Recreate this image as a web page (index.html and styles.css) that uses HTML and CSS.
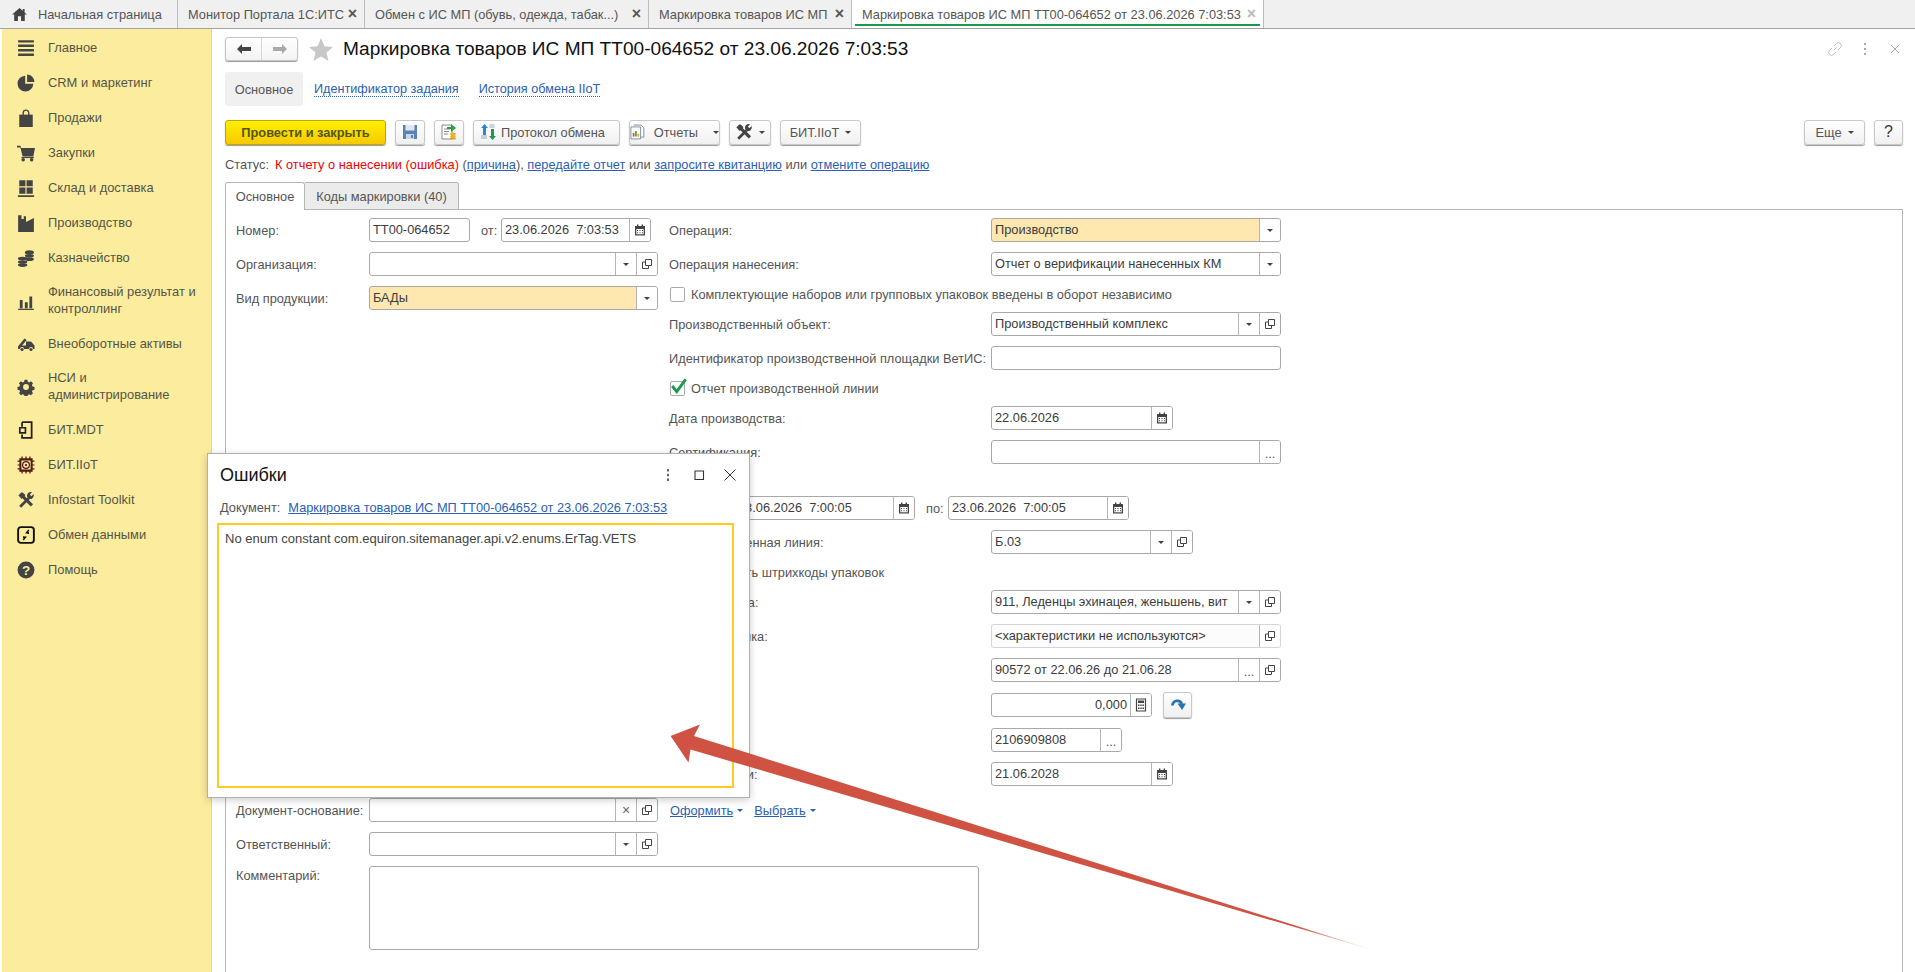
FILE: index.html
```html
<!DOCTYPE html>
<html lang="ru">
<head>
    <meta charset="UTF-8">
    <title>Маркировка товаров ИС МП ТТ00-064652</title>
    <link rel="stylesheet" href="styles.css">
</head>
<body>
    <svg class="sprite" aria-hidden="true">
        <symbol id="i-copy" viewBox="0 0 12 12"><path d="M4.500 1.500h6v6h-6zM4.500 4H1.500v6.500h6V7.500" fill="none" stroke="#444" stroke-width="1"/></symbol>
        <symbol id="i-cal" viewBox="0 0 12 12"><path d="M1 2h10v9.500H1z" fill="#444"/><path d="M3 .5h1.400V3H3zM7.600 .5H9V3H7.600z" fill="#444"/><path d="M2.300 5h7.400v5.300H2.300z" fill="#fff"/><path d="M3 6h1v1H3zM5.500 6h1v1h-1zM8 6h1v1H8zM3 8.200h1v1H3zM5.500 8.200h1v1h-1zM8 8.200h1v1H8z" fill="#444"/></symbol>
        <symbol id="i-calc" viewBox="0 0 12 14"><path d="M1.500 1h9v12h-9z" fill="none" stroke="#444" stroke-width="1.200"/><path d="M3 2.500h6V5H3z" fill="#444"/><path d="M3 6.500h1.500V8H3zM5.300 6.500h1.500V8H5.300zM7.500 6.500H9V8H7.500zM3 9.500h1.500V11H3zM5.300 9.500h1.500V11H5.300zM7.500 9.500H9V11H7.500z" fill="#444"/></symbol>
        <symbol id="i-tools" viewBox="0 0 20 20"><path d="M1.500 5L5 1.500l1.500.5 3 2.500-1 1 9.300 9.300-2.500 2.500-9.300-9.300-1 1-2-2.500z" fill="#444"/><path d="M3.500 17.500L13 8" stroke="#444" stroke-width="3"/><path d="M16.800 1.300a4.300 4.300 0 0 0-5.500 5.500L13 8.700a4.300 4.300 0 0 0 5.500-5.500L16 5.700 14.300 4z" fill="#444"/></symbol>
    </svg>

    <nav class="tabs">
        <div class="tab tab-home">
            <svg class="home-icon" viewBox="0 0 16 14"><path d="M8 0L0 7h2.300v7h4V9h3.400v5h4V7H16L13.500 4.800V1h-2v2L8 0z" fill="#444"/></svg>
            Начальная страница
        </div>
        <div class="tab tab-portal">Монитор Портала 1С:ИТС <span class="tab-x">×</span></div>
        <div class="tab tab-exchange">Обмен с ИС МП (обувь, одежда, табак...) <span class="tab-x">×</span></div>
        <div class="tab tab-list">Маркировка товаров ИС МП <span class="tab-x">×</span></div>
        <div class="tab tab-active">Маркировка товаров ИС МП ТТ00-064652 от 23.06.2026 7:03:53 <span class="tab-x tab-x-off">×</span></div>
        <div class="tab-rest"></div>
    </nav>

    <div class="layout">
        <aside class="sidebar">
            <div class="side-item"><svg class="side-icon" viewBox="0 0 16 16"><path d="M1 1h14v2.200H1zM1 4.800h14V7H1zM1 8.800h14V11H1zM1 12.800h14V15H1z" fill="#444"/></svg>Главное</div>
            <div class="side-item"><svg class="side-icon" viewBox="0 0 16 16"><path d="M7.300 1.500v7.200h7.200A7 7 0 1 1 7.300 1.500z" fill="#444"/><path d="M9 0.500a6.500 6.500 0 0 1 6.500 6.500H9z" fill="#444"/></svg>CRM и маркетинг</div>
            <div class="side-item"><svg class="side-icon" viewBox="0 0 16 16"><path d="M2 5h12v11H2z" fill="#444"/><path d="M5.500 7V3.500a2.500 2.500 0 0 1 5 0V7" fill="none" stroke="#444" stroke-width="1.200"/></svg>Продажи</div>
            <div class="side-item"><svg class="side-icon" viewBox="0 0 16 16"><path d="M0 1.500h3l.8 2H16l-1.500 7.500H5L3 3H0z" fill="#444"/><circle cx="5.500" cy="14" r="1.600" fill="#444"/><circle cx="13" cy="14" r="1.600" fill="#444"/><path d="M4 11.500h11v1H4z" fill="#444"/></svg>Закупки</div>
            <div class="side-item"><svg class="side-icon" viewBox="0 0 16 16"><path d="M2 1h5.500v5.500H2zM8.500 1H14v5.500H8.500zM2 7.500h5.500V13H2zM8.500 7.500H14V13H8.500zM.8 14.500h14.400V16H.8z" fill="#444"/></svg>Склад и доставка</div>
            <div class="side-item"><svg class="side-icon" viewBox="0 0 16 16"><path d="M1 16V1h3v3.500h2V2l2 0v5l7-3.500V16z" fill="#444"/></svg>Производство</div>
            <div class="side-item"><svg class="side-icon" viewBox="0 0 16 16"><ellipse cx="11" cy="3" rx="4" ry="1.800" fill="#444"/><ellipse cx="11" cy="6" rx="4" ry="1.600" fill="#444"/><ellipse cx="11" cy="9" rx="4" ry="1.600" fill="#444"/><ellipse cx="5" cy="8.500" rx="4.200" ry="1.700" fill="#444"/><ellipse cx="5" cy="11.500" rx="4.200" ry="1.600" fill="#444"/><ellipse cx="5" cy="14.300" rx="4.200" ry="1.600" fill="#444"/></svg>Казначейство</div>
            <div class="side-item side-item-two"><svg class="side-icon" viewBox="0 0 16 16"><path d="M2.500 7H5v7.500H2.500zM7 9h2.500v5.500H7zM11 4h2.500v10.500H11zM1 14.800h14V16H1z" fill="#444"/></svg><span>Финансовый результат и контроллинг</span></div>
            <div class="side-item"><svg class="side-icon" viewBox="0 0 18 16"><path d="M1 10.500L7.500 2.500l2.200 1.500L5 9.500h4V5.500h5l3.500 4v3.500h-1.500a2 2 0 0 0-4 0H7a2 2 0 0 0-4 0H1z" fill="#444"/><circle cx="5" cy="13.500" r="1.600" fill="#444"/><circle cx="14" cy="13.500" r="1.600" fill="#444"/></svg>Внеоборотные активы</div>
            <div class="side-item side-item-two"><svg class="side-icon" viewBox="0 0 16 16"><path d="M6.500 0.500h3l.4 2 1.500.7 1.800-1.100 2.100 2.100-1.100 1.800.7 1.500 2 .4v3l-2 .4-.7 1.500 1.100 1.800-2.100 2.100-1.800-1.100-1.500.7-.4 2h-3l-.4-2-1.500-.7-1.800 1.100-2.100-2.100 1.100-1.800-.7-1.500-2-.4v-3l2-.4.7-1.500L.6 4.200l2.100-2.100 1.800 1.100 1.500-.7z" fill="#444" transform="translate(1.200 1.200) scale(.85)"/><circle cx="8" cy="8" r="2.600" fill="#fbec9e"/></svg><span>НСИ и<br>администрирование</span></div>
            <div class="side-item"><svg class="side-icon" viewBox="0 0 16 16"><path d="M4.500 1h8.500v14H4.500V12" fill="none" stroke="#222" stroke-width="1.600"/><path d="M4.500 1v4" fill="none" stroke="#222" stroke-width="1.600"/><path d="M2.500 6h5v4.500h-5z" fill="none" stroke="#222" stroke-width="1.500"/></svg>БИТ.MDT</div>
            <div class="side-item"><svg class="side-icon" viewBox="0 0 16 16"><path d="M3 3h10v10H3z" fill="none" stroke="#521818" stroke-width="1.800"/><path d="M4.500.5v2.500M8 .5v2.500M11.500.5v2.500M4.500 13v2.500M8 13v2.500M11.500 13v2.500M.5 4.500H3M.5 8H3M.5 11.500H3M13 4.500h2.500M13 8h2.500M13 11.500h2.500" stroke="#521818" stroke-width="1.100"/><circle cx="8" cy="8" r="3" fill="none" stroke="#521818" stroke-width="1.100"/><circle cx="8" cy="8" r="1" fill="#521818"/></svg>БИТ.IIoT</div>
            <div class="side-item"><svg class="side-icon" viewBox="0 0 20 20"><use href="#i-tools"/></svg>Infostart Toolkit</div>
            <div class="side-item"><svg class="side-icon" viewBox="0 0 16 16"><rect x="1" y="1" width="14" height="14" rx="2.500" fill="none" stroke="#111" stroke-width="1.700"/><path d="M10.500 3.500l-2 2.500h1.500v1M5.500 12.500l2-2.500H6V9" fill="none" stroke="#111" stroke-width="1.300"/></svg>Обмен данными</div>
            <div class="side-item"><svg class="side-icon" viewBox="0 0 16 16"><circle cx="8" cy="8" r="7.500" fill="#444"/><text x="8" y="12" text-anchor="middle" class="help-mark">?</text></svg>Помощь</div>
        </aside>

        <main class="main">
            <header class="head">
                <div class="nav-btns">
                    <span class="nav-btn"><svg class="nav-arrow" viewBox="0 0 14 10"><path d="M0 5l5-5v3h9v4H5v3z" fill="#444"/></svg></span>
                    <span class="nav-btn"><svg class="nav-arrow" viewBox="0 0 14 10"><path d="M14 5L9 0v3H0v4h9v3z" fill="#aaa"/></svg></span>
                </div>
                <svg class="star" viewBox="0 0 24 23"><path d="M12 0l3.500 8.200 8.500.7-6.500 5.700 2 8.400L12 18.500 4.500 23l2-8.400L0 8.900l8.500-.7z" fill="#c8c8c8"/></svg>
                <h1 class="title">Маркировка товаров ИС МП ТТ00-064652 от 23.06.2026 7:03:53</h1>
                <div class="head-tools">
                    <svg class="head-ic" viewBox="0 0 16 16"><path d="M6.500 9.500l3-3M5 7L2.500 9.500a2.800 2.800 0 0 0 4 4L9 11M7 5l2.500-2.500a2.800 2.800 0 0 1 4 4L11 9" fill="none" stroke="#bbb" stroke-width="1"/></svg>
                    <svg class="head-ic" viewBox="0 0 16 16"><path d="M7 2h2v2H7zM7 7h2v2H7zM7 12h2v2H7z" fill="#aaa"/></svg>
                    <svg class="head-ic" viewBox="0 0 16 16"><path d="M4 4l8 8M12 4l-8 8" stroke="#aaa" stroke-width="1"/></svg>
                </div>
            </header>

            <div class="subnav">
                <span class="subnav-cur">Основное</span>
                <a class="subnav-link">Идентификатор задания</a>
                <a class="subnav-link">История обмена IIoT</a>
            </div>

            <div class="toolbar">
                <button class="btn btn-main">Провести и закрыть</button>
                <button class="btn btn-ic"><svg class="tb-ic" viewBox="0 0 16 16"><path d="M1 1h14v14H1z" fill="#5b82b4"/><path d="M3.500 1h9v5.500h-9z" fill="#dfe8f2"/><path d="M4 10h8v5H4z" fill="#c9d6e6"/><path d="M9 11h2v3H9z" fill="#5b82b4"/></svg></button>
                <button class="btn btn-ic"><svg class="tb-ic" viewBox="0 0 16 16"><path d="M1 1h10v14H1z" fill="#fff" stroke="#8a8a8a"/><path d="M3 5h6M3 7.500h5M3 10h4" stroke="#8a8a8a"/><path d="M6 3h4V0l5 4-5 4V5H6z" fill="#2e9e3e"/><ellipse cx="12" cy="10" rx="3" ry="1.200" fill="#e6b422"/><ellipse cx="12" cy="12.200" rx="3" ry="1.200" fill="#e6b422"/><ellipse cx="12" cy="14.400" rx="3" ry="1.200" fill="#d9a514"/></svg></button>
                <button class="btn btn-proto"><svg class="tb-ic" viewBox="0 0 16 16"><path d="M1 4l3.500-4L8 4H6v7H3V4z" fill="#2d86d2"/><path d="M9 12l3.500 4 3.500-4h-2V5h-3v7z" fill="#22964a"/><path d="M1 12h6M1 14h6M9.500 1h5M9.500 3h5" stroke="#9ab" stroke-width="1"/></svg>Протокол обмена</button>
                <button class="btn btn-rep"><svg class="tb-ic" viewBox="0 0 16 16"><path d="M4 .5h8l3 3v10h-3" fill="#fff" stroke="#7a8a9a"/><path d="M1 2.500h10.500v13H1z" fill="#fff" stroke="#7a8a9a"/><path d="M3 9h1.800v4H3z" fill="#d9482b"/><path d="M5.500 7h1.800v6H5.500z" fill="#36a24a"/><path d="M8 10h1.800v3H8z" fill="#e6a422"/></svg>Отчеты<i class="caret"></i></button>
                <button class="btn btn-tool"><svg class="tb-tool" viewBox="0 0 20 20"><use href="#i-tools"/></svg><i class="caret"></i></button>
                <button class="btn btn-bit">БИТ.IIoT<i class="caret"></i></button>
                <span class="toolbar-sp"></span>
                <button class="btn btn-more">Еще<i class="caret"></i></button>
                <button class="btn btn-help">?</button>
            </div>

            <p class="status">Статус:<span class="status-err">К отчету о нанесении (ошибка)</span> (<a>причина</a>), <a>передайте отчет</a> или <a>запросите квитанцию</a> или <a>отмените операцию</a></p>

            <div class="tabstrip">
                <span class="page-tab page-tab-cur">Основное</span>
                <span class="page-tab page-tab-codes">Коды маркировки (40)</span>
            </div>

            <section class="panel">
                <div class="form-top">
                    <div class="col-left">
                        <div class="row">
                            <label class="lbl-l">Номер:</label>
                            <div class="fld w-num"><span class="val">ТТ00-064652</span></div>
                            <label class="lbl-from">от:</label>
                            <div class="fld w-dt"><span class="val">23.06.2026&nbsp; 7:03:53</span><span class="cell"><svg class="ic12"><use href="#i-cal"/></svg></span></div>
                        </div>
                        <div class="row">
                            <label class="lbl-l">Организация:</label>
                            <div class="fld w-left"><span class="val"></span><span class="cell"><i class="caret"></i></span><span class="cell"><svg class="ic12"><use href="#i-copy"/></svg></span></div>
                        </div>
                        <div class="row">
                            <label class="lbl-l">Вид продукции:</label>
                            <div class="fld w-left fld-req"><span class="val">БАДы</span><span class="cell"><i class="caret"></i></span></div>
                        </div>
                    </div>

                    <div class="col-right">
                        <div class="row"><label class="lbl-r">Операция:</label><div class="fld w-full fld-req"><span class="val">Производство</span><span class="cell"><i class="caret"></i></span></div></div>
                        <div class="row"><label class="lbl-r">Операция нанесения:</label><div class="fld w-full"><span class="val">Отчет о верификации нанесенных КМ</span><span class="cell"><i class="caret"></i></span></div></div>
                        <div class="row-check"><span class="check"></span>Комплектующие наборов или групповых упаковок введены в оборот независимо</div>
                        <div class="row"><label class="lbl-r">Производственный объект:</label><div class="fld w-full"><span class="val">Производственный комплекс</span><span class="cell"><i class="caret"></i></span><span class="cell"><svg class="ic12"><use href="#i-copy"/></svg></span></div></div>
                        <div class="row"><label class="lbl-r">Идентификатор производственной площадки ВетИС:</label><div class="fld w-full"><span class="val"></span></div></div>
                        <div class="row-check"><span class="check"><svg class="check-mark" viewBox="0 0 16 16"><path d="M2 8l4 5 8-11" fill="none" stroke="#1a9a4a" stroke-width="2.600"/></svg></span>Отчет производственной линии</div>
                        <div class="row"><label class="lbl-r">Дата производства:</label><div class="fld w-date"><span class="val">22.06.2026</span><span class="cell"><svg class="ic12"><use href="#i-cal"/></svg></span></div></div>
                        <div class="row"><label class="lbl-r">Сертификация:</label><div class="fld w-full"><span class="val"></span><span class="cell cell-dots">...</span></div></div>
                        <div class="row-blank"></div>
                        <div class="row">
                            <label class="lbl-period">Период с:</label>
                            <div class="fld w-period"><span class="val">23.06.2026&nbsp; 7:00:05</span><span class="cell"><svg class="ic12"><use href="#i-cal"/></svg></span></div>
                            <label class="lbl-to">по:</label>
                            <div class="fld w-period"><span class="val">23.06.2026&nbsp; 7:00:05</span><span class="cell"><svg class="ic12"><use href="#i-cal"/></svg></span></div>
                        </div>
                        <div class="row"><label class="lbl-r">Производственная линия:</label><div class="fld w-line"><span class="val">Б.03</span><span class="cell"><i class="caret"></i></span><span class="cell"><svg class="ic12"><use href="#i-copy"/></svg></span></div></div>
                        <div class="row-check"><span class="check"></span>Установить штрихкоды упаковок</div>
                        <div class="row"><label class="lbl-r">Номенклатура:</label><div class="fld w-full"><span class="val val-tight">911, Леденцы эхинацея, женьшень, вит</span><span class="cell"><i class="caret"></i></span><span class="cell"><svg class="ic12"><use href="#i-copy"/></svg></span></div></div>
                        <div class="row"><label class="lbl-r">Характеристика:</label><div class="fld w-full fld-ro"><span class="val">&lt;характеристики не используются&gt;</span><span class="cell"><svg class="ic12"><use href="#i-copy"/></svg></span></div></div>
                        <div class="row"><label class="lbl-r">Сертификат:</label><div class="fld w-full"><span class="val">90572 от 22.06.26 до 21.06.28</span><span class="cell cell-dots">...</span><span class="cell"><svg class="ic12"><use href="#i-copy"/></svg></span></div></div>
                        <div class="row row-tall">
                            <label class="lbl-r">Количество:</label>
                            <div class="fld w-qty"><span class="val val-num">0,000</span><span class="cell"><svg class="ic14"><use href="#i-calc"/></svg></span></div>
                            <button class="btn btn-go"><svg class="go-ic" viewBox="0 0 16 16"><path d="M2.500 8.500a4.800 4.800 0 0 1 9.300-1.500" fill="none" stroke="#2874b0" stroke-width="2.800"/><path d="M7.500 6.500h8.500l-4 6.500z" fill="#2874b0"/></svg></button>
                        </div>
                        <div class="row"><label class="lbl-r">Код ТН ВЭД:</label><div class="fld w-code"><span class="val">2106909808</span><span class="cell cell-dots">...</span></div></div>
                        <div class="row"><label class="lbl-r">Срок годности:</label><div class="fld w-date"><span class="val">21.06.2028</span><span class="cell"><svg class="ic12"><use href="#i-cal"/></svg></span></div></div>
                    </div>
                </div>

                <div class="form-bottom">
                    <div class="row">
                        <label class="lbl-l">Документ-основание:</label>
                        <div class="fld w-left"><span class="val"></span><span class="cell cell-x">×</span><span class="cell"><svg class="ic12"><use href="#i-copy"/></svg></span></div>
                        <a class="act-link act-first">Оформить</a><i class="caret caret-blue"></i>
                        <a class="act-link">Выбрать</a><i class="caret caret-blue"></i>
                    </div>
                    <div class="row">
                        <label class="lbl-l">Ответственный:</label>
                        <div class="fld w-left"><span class="val"></span><span class="cell"><i class="caret"></i></span><span class="cell"><svg class="ic12"><use href="#i-copy"/></svg></span></div>
                    </div>
                    <div class="row row-comment">
                        <label class="lbl-l">Комментарий:</label>
                        <div class="fld fld-area"></div>
                    </div>
                </div>
            </section>
        </main>
    </div>

    <!-- окно поверх формы -->
    <div class="dialog">
        <div class="dialog-head">
            <span class="dialog-title">Ошибки</span>
            <svg class="dialog-ic" viewBox="0 0 16 16"><path d="M7 2h2v2.400H7zM7 6.800h2v2.400H7zM7 11.600h2V14H7z" fill="#666"/></svg>
            <svg class="dialog-ic" viewBox="0 0 16 16"><path d="M4 4h8.500v8.500H4z" fill="none" stroke="#333" stroke-width="1.100"/></svg>
            <svg class="dialog-ic" viewBox="0 0 16 16"><path d="M2.500 2.500l11 11M13.500 2.500l-11 11" stroke="#333" stroke-width="1"/></svg>
        </div>
        <div class="dialog-doc">Документ:<a>Маркировка товаров ИС МП ТТ00-064652 от 23.06.2026 7:03:53</a></div>
        <div class="dialog-box">No enum constant com.equiron.sitemanager.api.v2.enums.ErTag.VETS</div>
    </div>

    <!-- стрелка с аннотации -->
    <svg class="annot" viewBox="0 0 1915 972">
        <defs>
            <linearGradient id="fade" gradientUnits="userSpaceOnUse" x1="1300" y1="920" x2="1376" y2="951">
                <stop offset="0" stop-color="#d05242"/>
                <stop offset="1" stop-color="#d05242" stop-opacity="0"/>
            </linearGradient>
        </defs>
        <path d="M670.600 736L700 724.500 694 736 1376 951 690.500 749.500 688.500 762.500z" fill="url(#fade)"/>
    </svg>
</body>
</html>
```

FILE: styles.css
```css
html, body {
    height: 100%;
}

body {
    margin: 0;
    overflow: hidden;
    background: #fff;
    font-family: "Liberation Sans", Arial, sans-serif;
    font-size: 12.800px;
    color: #555;
    display: flex;
    flex-direction: column;
}

a {
    color: #2a5fb4;
    text-decoration: underline;
}

.sprite {
    display: none;
}

/* вкладки сверху */
.tabs {
    display: flex;
    height: 28px;
    flex: none;
    background: #f0f0f0;
    border-bottom: 1px solid #a3a3a3;
}

.tab {
    display: flex;
    align-items: center;
    justify-content: space-between;
    box-sizing: border-box;
    padding: 0 7px 0 10px;
    border-right: 1px solid #bdbdbd;
    white-space: nowrap;
    flex: none;
}

.tab-home { width: 178px; padding-left: 12px; justify-content: flex-start; }
.tab-portal { width: 187px; }
.tab-exchange { width: 284px; }
.tab-list { width: 203px; }

.tab-active {
    width: 412px;
    background: #fff;
    position: relative;
}

.tab-active::after {
    content: "";
    position: absolute;
    left: 3px;
    right: 3px;
    bottom: 2px;
    height: 2px;
    background: #1a9a4a;
}

.home-icon {
    width: 15px;
    height: 13px;
    margin-right: 11px;
}

.tab-x {
    font-size: 16px;
    font-weight: bold;
    color: #555;
    margin-left: 3px;
}

.tab-x-off {
    color: #bbb;
}

.tab-rest {
    flex: 1;
}

.layout {
    flex: 1;
    display: flex;
    min-height: 0;
}

/* левое меню */
.sidebar {
    width: 210px;
    margin-left: 2px;
    flex: none;
    box-sizing: border-box;
    padding-top: 1px;
    font-size: 12.900px;
    background: #fbec9e;
    border-right: 1px solid #e6d88f;
}

.side-item {
    display: flex;
    align-items: center;
    height: 35px;
    padding-left: 15px;
    color: #555545;
}

.side-item-two {
    height: 51px;
    line-height: 16.500px;
}

.side-icon {
    width: 18px;
    height: 18px;
    margin-right: 13px;
    flex: none;
}

.help-mark {
    font-size: 12px;
    font-weight: bold;
    fill: #fbec9e;
}

/* форма */
.main {
    flex: 1;
    min-width: 0;
    display: flex;
    flex-direction: column;
    padding: 8px 12px 0 13px;
}

.head {
    display: flex;
    align-items: center;
    height: 24px;
    flex: none;
}

.nav-btns {
    display: flex;
    width: 73px;
    height: 24px;
    box-sizing: border-box;
    border: 1px solid #c4c4c4;
    border-radius: 3px;
    box-shadow: 0 1px 1px #999;
    background: linear-gradient(#fff, #f3f3f3);
}

.nav-btn {
    flex: 1;
    display: flex;
    align-items: center;
    justify-content: center;
}

.nav-btn + .nav-btn {
    border-left: 1px solid #d5d5d5;
}

.nav-arrow {
    width: 14px;
    height: 10px;
}

.star {
    width: 24px;
    height: 23px;
    margin-left: 11px;
}

.title {
    margin: 0 0 0 10px;
    font-size: 19.100px;
    font-weight: normal;
    color: #111;
    white-space: nowrap;
}

.head-tools {
    margin-left: auto;
    display: flex;
    gap: 14px;
}

.head-ic {
    width: 16px;
    height: 16px;
}

.subnav {
    display: flex;
    align-items: center;
    height: 34px;
    margin-top: 11px;
    flex: none;
}

.subnav-cur {
    display: flex;
    align-items: center;
    justify-content: center;
    width: 78px;
    height: 100%;
    background: #f0f0f0;
    border-radius: 3px;
}

.subnav-link {
    margin-left: 11px;
    font-size: 12.650px;
    color: #2a5fb4;
    text-decoration: none;
    border-bottom: 1px dotted #2a5fb4;
}

.subnav-link + .subnav-link {
    margin-left: 20px;
}

.toolbar {
    display: flex;
    align-items: center;
    gap: 9px;
    height: 26px;
    margin-top: 13px;
    flex: none;
}

.btn {
    display: inline-flex;
    align-items: center;
    justify-content: center;
    height: 25px;
    box-sizing: border-box;
    padding: 0;
    border: 1px solid #c8c8c8;
    border-radius: 3px;
    background: linear-gradient(#fff, #f0f0f0);
    box-shadow: 0 1px 1px #999;
    color: #555;
    font: inherit;
    flex: none;
}

.btn-main {
    width: 161px;
    border-color: #c2a500;
    background: linear-gradient(#fff000, #f6c900);
    color: #55551f;
    font-weight: bold;
}

.btn-ic { width: 30px; }
.btn-proto { width: 147px; gap: 5px; justify-content: flex-start; padding-left: 6px; }
.btn-rep { width: 91px; gap: 9px; }
.btn-tool { width: 42px; gap: 0; }
.btn-bit { width: 81px; }
.btn-more { width: 61px; }
.btn-help { width: 29px; font-size: 16px; color: #333; }

.toolbar-sp {
    flex: 1;
}

.tb-ic {
    width: 16px;
    height: 16px;
}

.tb-tool {
    width: 18px;
    height: 18px;
}

.caret {
    display: inline-block;
    width: 0;
    height: 0;
    border-left: 3px solid transparent;
    border-right: 3px solid transparent;
    border-top: 3px solid #444;
}

.btn .caret {
    margin-left: 6px;
}

.status {
    margin: 12px 0 0;
    height: 16px;
    line-height: 16px;
    flex: none;
}

.status-err {
    color: #f00000;
    margin-left: 6px;
}

.tabstrip {
    display: flex;
    height: 27px;
    margin-top: 9px;
    flex: none;
    position: relative;
    z-index: 1;
}

.page-tab {
    display: flex;
    align-items: center;
    justify-content: center;
    box-sizing: border-box;
    height: 28px;
    border: 1px solid #b5b5b5;
    border-left: 0;
    border-radius: 0 3px 0 0;
    background: #ebebeb;
}

.page-tab-cur {
    width: 80px;
    border-left: 1px solid #b5b5b5;
    border-bottom: 0;
    border-radius: 3px 3px 0 0;
    background: #fff;
}

.page-tab-codes {
    width: 154px;
}

.panel {
    flex: 1;
    box-sizing: border-box;
    padding: 8px 0 0 10px;
    border: 1px solid #b5b5b5;
    border-bottom: 0;
}

.form-top {
    display: flex;
}

.col-left {
    width: 433px;
    flex: none;
    display: flex;
    flex-direction: column;
    gap: 10px;
}

.col-right {
    display: flex;
    flex-direction: column;
    gap: 10px;
}

.form-bottom {
    display: flex;
    flex-direction: column;
    gap: 10px;
    margin-top: 12px;
}

.row {
    display: flex;
    align-items: center;
    height: 24px;
}

.row-tall {
    height: 26px;
}

.row-blank {
    height: 12px;
}

.row-comment {
    height: 84px;
    align-items: flex-start;
}

.row-check {
    display: flex;
    align-items: center;
    height: 16px;
    padding-left: 1px;
    white-space: nowrap;
}

.check {
    display: flex;
    width: 15px;
    height: 15px;
    box-sizing: border-box;
    margin-right: 6px;
    border: 1px solid #aaa;
    border-radius: 2px;
    background: #fff;
}

.check-mark {
    width: 18px;
    height: 18px;
    margin: -5px 0 0 -1px;
    flex: none;
}

label {
    flex: none;
    white-space: nowrap;
}

.lbl-l { width: 133px; }
.lbl-r { width: 322px; }
.lbl-from { width: 31px; padding-left: 11px; box-sizing: border-box; }
.lbl-period { width: 65px; }
.lbl-to { width: 33px; padding-left: 11px; box-sizing: border-box; }

.row-comment .lbl-l {
    padding-top: 2px;
}

.fld {
    display: flex;
    height: 24px;
    box-sizing: border-box;
    border: 1px solid #a9a9a9;
    border-radius: 3px;
    background: #fff;
    flex: none;
    overflow: hidden;
}

.fld-req {
    background: #ffe7b0;
}

.fld-ro {
    background: #fcfcfc;
    border-color: #d5d5d5;
}

.fld-area {
    width: 610px;
    height: 84px;
}

.val {
    flex: 1;
    min-width: 0;
    padding: 0 3px;
    line-height: 22px;
    color: #3c3c3c;
    white-space: nowrap;
    overflow: hidden;
}

.val-tight {
    padding-right: 0;
    letter-spacing: -.05px;
}

.val-num {
    text-align: right;
}

.cell {
    width: 21px;
    flex: none;
    display: flex;
    align-items: center;
    justify-content: center;
    border-left: 1px solid #b5b5b5;
    box-sizing: border-box;
    background: #fff;
}

.cell-dots {
    align-items: flex-end;
    padding-bottom: 4px;
    line-height: 10px;
}

.cell-x {
    font-size: 14px;
    color: #666;
}

.ic12 { width: 12px; height: 12px; }
.ic14 { width: 12px; height: 14px; }

.w-num { width: 101px; }
.w-dt { width: 150px; }
.w-left { width: 289px; }
.w-full { width: 290px; }
.w-date { width: 182px; }
.w-period { width: 181px; }
.w-line { width: 202px; }
.w-qty { width: 161px; }
.w-code { width: 131px; }

.btn-go {
    width: 29px;
    height: 26px;
    margin-left: 11px;
}

.go-ic {
    width: 16px;
    height: 16px;
}

.act-first {
    margin-left: 12px;
}

.caret-blue {
    border-top-color: #2a5fb4;
    margin: 0 11px 0 4px;
}

/* окно ошибок */
.dialog {
    position: absolute;
    left: 207px;
    top: 453px;
    width: 543px;
    height: 345px;
    box-sizing: border-box;
    padding: 0 15px 9px 9px;
    display: flex;
    flex-direction: column;
    background: #fff;
    border: 1px solid #b0b0b0;
    box-shadow: 0 2px 8px rgba(0, 0, 0, .2);
}

.dialog-head {
    display: flex;
    align-items: center;
    height: 42px;
    gap: 15px;
    flex: none;
    margin-right: -4px;
}

.dialog-title {
    font-size: 18px;
    color: #111;
    margin-left: 3px;
    margin-right: auto;
}

.dialog-ic {
    width: 16px;
    height: 16px;
}

.dialog-doc {
    height: 27px;
    flex: none;
    padding-left: 3px;
    line-height: 24px;
}

.dialog-doc a {
    margin-left: 8px;
}

.dialog-box {
    flex: 1;
    padding: 6px;
    border: 2px solid #ffcb20;
    font-size: 13px;
    color: #444;
}

.annot {
    position: absolute;
    left: 0;
    top: 0;
    width: 1915px;
    height: 972px;
    pointer-events: none;
}
```
